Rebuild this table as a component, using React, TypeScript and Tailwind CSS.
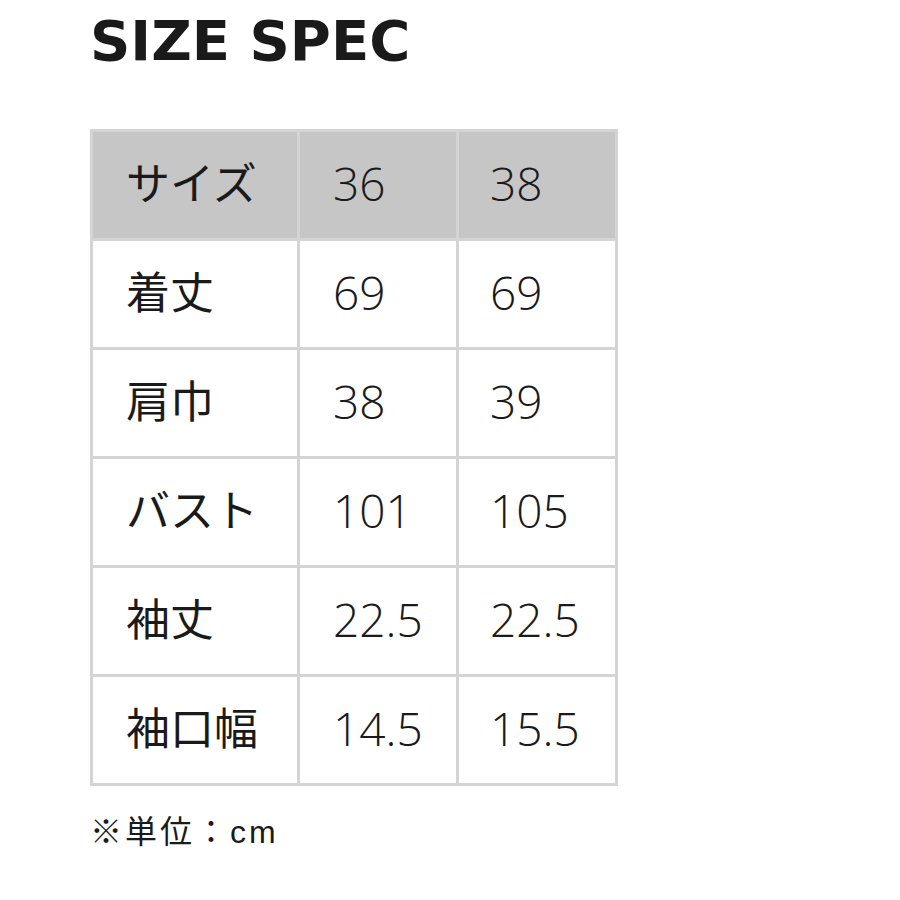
const rows = [
  ["着丈", "69", "69"],
  ["肩巾", "38", "39"],
  ["バスト", "101", "105"],
  ["袖丈", "22.5", "22.5"],
  ["袖口幅", "14.5", "15.5"],
];

const jp = "flex h-[106px] items-center pl-[33px] text-[44px]";
const num = "flex h-[106px] items-center pb-[3px] text-[46px] font-[350] [font-family:'Open_Sans',sans-serif]";

export default function App() {
  return (
    <div className="h-[900px] w-[900px] bg-white pl-[90px] pt-[8px] text-[#1a1a1a] [font-family:'Liberation_Sans','Noto_Sans_CJK_JP',sans-serif]">
      <h1 className="h-[121px] text-[56px] font-bold leading-[66px] [font-family:'DejaVu_Sans',sans-serif]">SIZE SPEC</h1>
      <div className="grid w-[528px] grid-cols-[204px_156px_156px] gap-[3px] bg-[#d4d4d4] p-[3px]">
        <div className={`${jp} bg-[#c6c6c6]`}>サイズ</div>
        <div className={`${num} bg-[#c6c6c6] pl-[33px]`}>36</div>
        <div className={`${num} bg-[#c6c6c6] pl-[31px]`}>38</div>
        {rows.map((r) => (
          <>
            <div key={r[0]} className={`${jp} bg-white`}>{r[0]}</div>
            <div className={`${num} bg-white pl-[33px]`}>{r[1]}</div>
            <div className={`${num} bg-white pl-[31px]`}>{r[2]}</div>
          </>
        ))}
      </div>
      <p className="mt-[30px] text-[32px] leading-none tracking-[3px]">※単位：cm</p>
    </div>
  );
}
